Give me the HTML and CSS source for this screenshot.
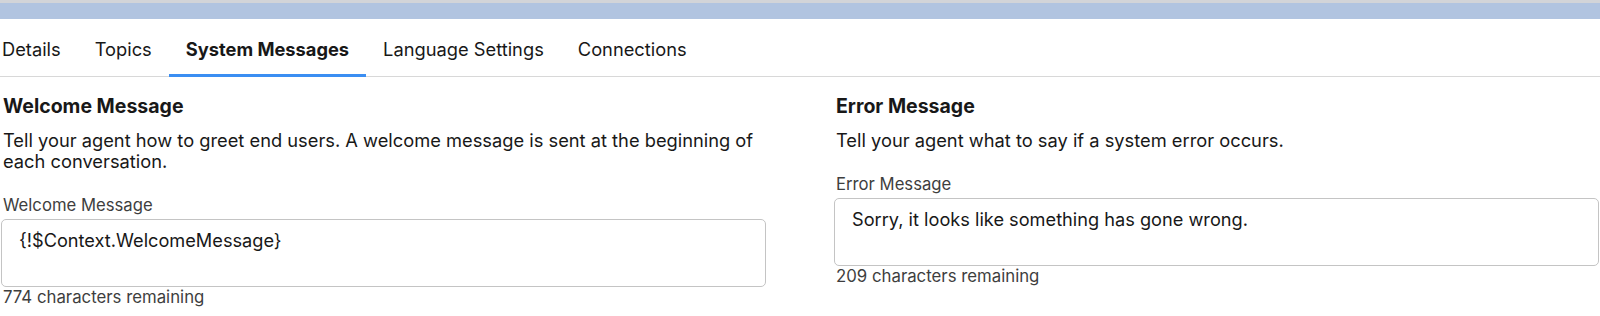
FILE: index.html
```html
<!DOCTYPE html>
<html lang="en">
<head>
<meta charset="utf-8">
<title>System Messages</title>
<link rel="stylesheet" href="styles.css">
</head>
<body>
<div class="topband"></div>
<nav class="tabs">
  <a class="tab tab-first">Details</a>
  <a class="tab">Topics</a>
  <a class="tab tab-active">System Messages</a>
  <a class="tab">Language Settings</a>
  <a class="tab">Connections</a>
</nav>
<main class="content">
  <section class="col">
    <h2 class="col-title">Welcome Message</h2>
    <p class="col-desc">Tell your agent how to greet end users. A welcome message is sent at the beginning of each conversation.</p>
    <label class="field-label">Welcome Message</label>
    <textarea class="field-box" readonly>{!$Context.WelcomeMessage}</textarea>
    <div class="field-count">774 characters remaining</div>
  </section>
  <section class="col">
    <h2 class="col-title">Error Message</h2>
    <p class="col-desc">Tell your agent what to say if a system error occurs.</p>
    <label class="field-label">Error Message</label>
    <textarea class="field-box" readonly>Sorry, it looks like something has gone wrong.</textarea>
    <div class="field-count">209 characters remaining</div>
  </section>
</main>
</body>
</html>
```
FILE: styles.css
```css
* { box-sizing: border-box; }
html, body { margin: 0; padding: 0; background: #ffffff; }
body {
  font-family: Inter, "Noto Sans", sans-serif;
  color: #181818;
  width: 1600px;
  height: 316px;
  overflow: hidden;
}
.topband {
  height: 19px;
  border-top: 3px solid #d2d4d8;
  background: #b1c4e0;
}
.tabs {
  display: flex;
  height: 58px;
  border-bottom: 1px solid #d8d8d8;
}
.tab {
  display: flex;
  align-items: center;
  padding: 5px 17px 0;
  font-size: 18.3px;
  color: #181818;
  border-bottom: 3px solid transparent;
  margin-bottom: -1px;
  white-space: nowrap;
}
.tab-first { padding-left: 2px; }
.tab-active {
  font-weight: 700;
  border-bottom-color: #3b8ef2;
}
.content {
  display: grid;
  grid-template-columns: 765px 765px;
  column-gap: 68px;
  padding-left: 1px;
  align-items: start;
}
.col { display: flex; flex-direction: column; }
.col-title {
  margin: 17px 0 0 2px;
  font-size: 19.5px;
  line-height: 24px;
  font-weight: 700;
}
.col-desc {
  margin: 12px 0 0 2px;
  font-size: 18.3px;
  line-height: 21px;
}
.field-label {
  margin: 23px 0 0 2px;
  font-size: 16.7px;
  line-height: 20px;
  color: #3e3e3e;
}
.field-box {
  margin-top: 4px;
  height: 68px;
  width: 100%;
  border: 1px solid #c4c4c4;
  border-radius: 5px;
  padding: 9px 17px;
  font-family: Inter, "Noto Sans", sans-serif;
  font-size: 18.2px;
  line-height: 22px;
  color: #181818;
  resize: none;
  outline: none;
  background: #ffffff;
}
.field-count {
  margin-left: 2px;
  font-size: 16.8px;
  line-height: 21px;
  color: #3e3e3e;
}
```
